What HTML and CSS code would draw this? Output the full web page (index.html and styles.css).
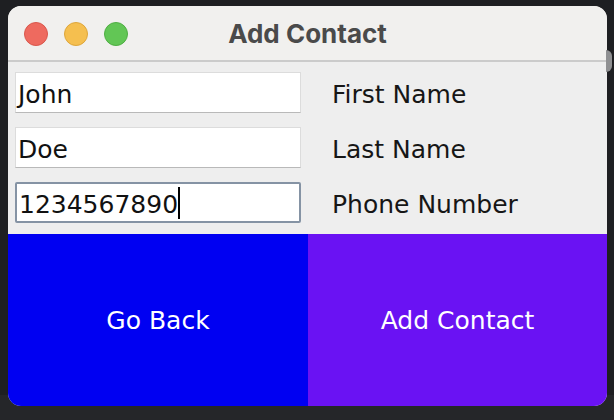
FILE: index.html
```html
<!DOCTYPE html>
<html lang="en">
<head>
<meta charset="utf-8">
<title>Add Contact</title>
<link rel="stylesheet" href="styles.css">
</head>
<body>
<div class="window">
  <div class="titlebar">
    <div class="lights">
      <span class="light red"></span>
      <span class="light yellow"></span>
      <span class="light green"></span>
    </div>
    <div class="title">Add Contact</div>
    <div class="spacer"></div>
  </div>
  <div class="form">
    <div class="field"><span class="value">John</span></div>
    <div class="label">First Name</div>
    <div class="field"><span class="value">Doe</span></div>
    <div class="label">Last Name</div>
    <div class="field focused"><span class="value">1234567890</span><span class="caret"></span></div>
    <div class="label">Phone Number</div>
  </div>
  <div class="actions">
    <div class="btn back">Go Back</div>
    <div class="btn add">Add Contact</div>
  </div>
</div>
<span class="edge-knob"></span>
</body>
</html>
```
FILE: styles.css
```css
html, body {
  margin: 0;
  padding: 0;
}
body {
  width: 614px;
  height: 420px;
  overflow: hidden;
  background: linear-gradient(#1e1f22 0, #1e1f22 395px, #252629 395px);
  position: relative;
  padding-top: 6px;
  box-sizing: border-box;
}
.window {
  margin-left: 8px;
  width: 599px;
  height: 400px;
  border-radius: 13px;
  overflow: hidden;
  background: #eeeeee;
  display: flex;
  flex-direction: column;
}
.titlebar {
  height: 54px;
  flex: none;
  background: #f1f0ee;
  border-bottom: 2px solid #cbcbcb;
  display: grid;
  grid-template-columns: 1fr auto 1fr;
  align-items: center;
}
.lights {
  display: flex;
  gap: 16px;
  padding-left: 16px;
  padding-top: 1px;
}
.light {
  width: 24px;
  height: 24px;
  border-radius: 50%;
  box-sizing: border-box;
}
.red { background: #ee6a5f; border: 1px solid #d9574c; }
.yellow { background: #f5bf4f; border: 1px solid #dea63b; }
.green { background: #62c655; border: 1px solid #4fae43; }
.title {
  font-family: "Inter", "Liberation Sans", sans-serif;
  font-weight: 700;
  font-size: 26px;
  color: #4a4a4a;
  padding-top: 1px;
}
.form {
  display: grid;
  grid-template-columns: 300px 1fr;
  row-gap: 14px;
  padding: 10px 0 10px 0;
  height: 172px;
  box-sizing: border-box;
  align-content: start;
}
.field {
  margin-left: 7px;
  width: 286px;
  height: 41px;
  box-sizing: border-box;
  background: #ffffff;
  border: 1px solid #dcdcdc;
  border-bottom-color: #b9b9b9;
  display: flex;
  align-items: center;
  padding: 3px 0 0 2px;
  font-family: "DejaVu Sans", "Liberation Sans", sans-serif;
  font-size: 25px;
  color: #111111;
}
.field.focused {
  border: 2px solid #8593a4;
  border-radius: 2px;
  padding-left: 2px;
}
.caret {
  width: 2px;
  height: 32px;
  background: #000;
  margin-top: -3px;
}
.label {
  display: flex;
  align-items: center;
  padding: 3px 0 0 24px;
  font-family: "DejaVu Sans", "Liberation Sans", sans-serif;
  font-size: 25px;
  color: #161616;
}
.actions {
  flex: 1;
  display: grid;
  grid-template-columns: 300px 1fr;
}
.btn {
  display: flex;
  align-items: center;
  justify-content: center;
  font-family: "DejaVu Sans", "Liberation Sans", sans-serif;
  font-size: 25px;
  color: #ffffff;
}
.back { background: #0000f2; }
.add { background: #6a12f3; }
.edge-knob {
  position: absolute;
  left: 606px;
  top: 50px;
  width: 6px;
  height: 22px;
  border-radius: 0 6px 6px 0;
  background: #8f9092;
}
```
